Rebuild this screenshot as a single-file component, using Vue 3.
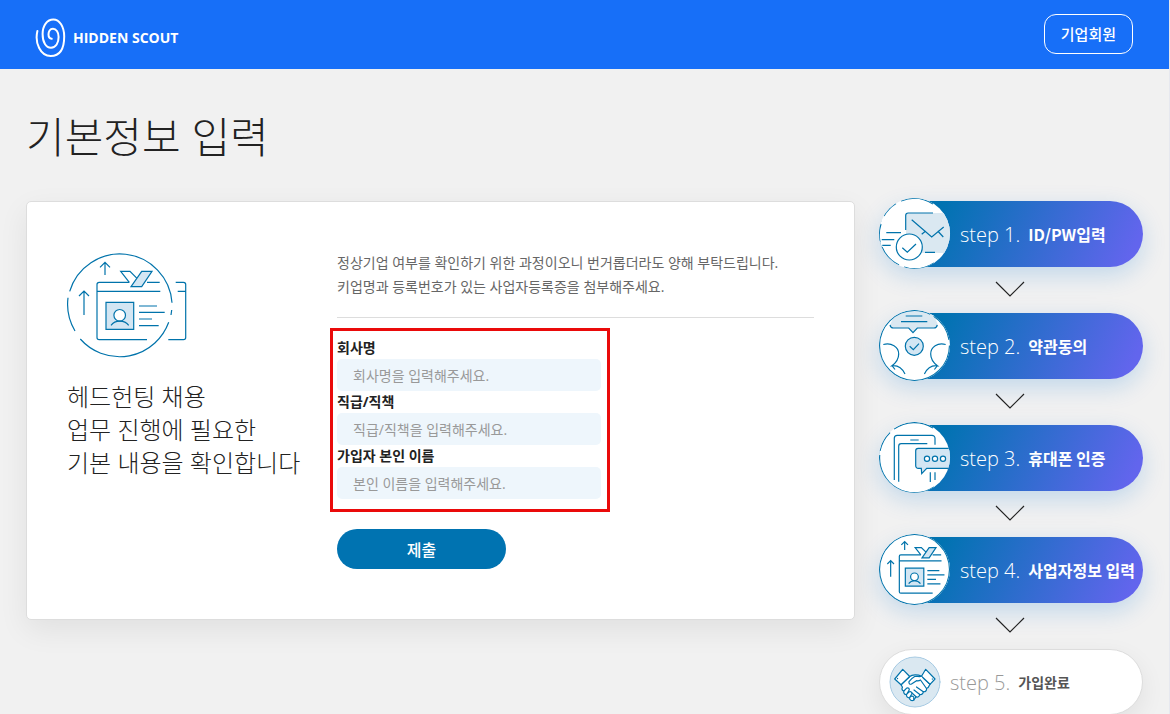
<script setup>
const fields = [
  { id: 'company', label: '회사명', placeholder: '회사명을 입력해주세요.' },
  { id: 'position', label: '직급/직책', placeholder: '직급/직책을 입력해주세요.' },
  { id: 'name', label: '가입자 본인 이름', placeholder: '본인 이름을 입력해주세요.' },
]

const steps = [
  { no: 1, label: 'ID/PW입력' },
  { no: 2, label: '약관동의' },
  { no: 3, label: '휴대폰 인증' },
  { no: 4, label: '사업자정보 입력' },
]
</script>

<template>
  <div class="page">
    <svg class="defs" width="0" height="0" aria-hidden="true">
      <symbol id="idcard" overflow="visible">
        <path d="M31 34.5a2.2 2.2 0 0 1 2.2-2.2H63.3M81 32.3h12.7M109.7 32.3h7.8a2.2 2.2 0 0 1 2.2 2.2v53a2.2 2.2 0 0 1-2.2 2.2h-15.2M81 89.7H33.2a2.2 2.2 0 0 1-2.2-2.2v-53M31 41.3h63.3M111.7 41.3h8" />
        <path class="tint" d="M40 52.3h27.7v27H40z" />
        <circle class="blank" cx="53.7" cy="65.3" r="5.8" />
        <path d="M45 75.3c2-2.700 5-4.200 8.700-4.200s7 1.500 9 4.200M73 56h18M73 62.300h25.700M73 69h13M73 75.700h19.700" />
        <path d="M39 25V12.300M34 17.300l5-5 5 5M18 65V41M13 46l5-5 5 5" />
        <path d="M63.300 32.300L54.700 21.300H64l7 7" />
        <path class="tint" d="M75.700 21.300H86L75.700 36.700H65z" />
      </symbol>
    </svg>

    <header class="top">
      <a class="brand" href="#">
        <svg class="spiral" viewBox="0 0 31 40" aria-hidden="true">
          <path d="M2.400 13C-.5 25 5.500 38 15.700 38S29.200 29 29.200 18.500C29.200 8.500 24.500 1.500 18.300 1.500S7.600 7.500 7.600 16C7.600 24.500 11 29.800 16 29.800s7.600-5 7.600-10.800c0-5-2.500-8.200-5.600-8.200s-4.500 3-4.500 5.800c0 2.600 1.500 4 3.200 4.200" />
        </svg>
        <span>HIDDEN SCOUT</span>
      </a>
      <button class="member" type="button">기업회원</button>
    </header>

    <main class="body">
      <h1>기본정보 입력</h1>
      <div class="columns">
        <section class="card">
          <div class="intro">
            <svg class="intro-icon line" viewBox="0 0 122 108" aria-hidden="true">
              <path d="M3.700 41.300A52.300 52.300 0 0 1 106 52.700M105.700 60l-.7 5M102.700 72.300A52.300 52.300 0 0 1 14.300 89M9 81A52.300 52.300 0 0 1 2 47.700" />
              <use href="#idcard" />
            </svg>
            <h2>헤드헌팅 채용<br />업무 진행에 필요한<br />기본 내용을 확인합니다</h2>
          </div>
          <form class="form" @submit.prevent>
            <p class="notice">정상기업 여부를 확인하기 위한 과정이오니 번거롭더라도 양해 부탁드립니다.<br />키업명과 등록번호가 있는 사업자등록증을 첨부해주세요.</p>
            <div class="frame">
              <div v-for="f in fields" :key="f.id" class="field">
                <label :for="f.id">{{ f.label }}</label>
                <input :id="f.id" type="text" :placeholder="f.placeholder" />
              </div>
            </div>
            <button class="submit" type="submit">제출</button>
          </form>
        </section>

        <ol class="steps">
          <li v-for="s in steps" :key="s.no">
            <div class="pill">
              <span class="badge">
                <svg v-if="s.no === 1" class="line" viewBox="0 0 71 71" aria-hidden="true">
                  <path class="wash" d="M27 15h44v40H27z" />
                  <path d="M26.700 32V17.500a2.500 2.500 0 0 1 2.500-2.500H54M32.700 21.700l20 17.300 12-10M42.700 36.300l4-3.300M58.700 33l5.600 6M7.300 34.700H22M2.700 41.700h12.600M3.300 47.300h8.400M46 54.300h10" />
                  <circle class="blank" cx="30.300" cy="49" r="13" />
                  <path d="M23.300 49.700l5 4.600 8.700-8.300" />
                  <path d="M5 18A35 35 0 0 1 17 5.500M22 3A35 35 0 0 1 54 6M1 44A35 35 0 0 1 2 26M3 49A35 35 0 0 0 20 67M25 69A35 35 0 0 0 55 65" />
                </svg>
                <svg v-else-if="s.no === 2" class="line" viewBox="0 0 71 71" aria-hidden="true">
                  <path class="wash" d="M11 15L18 0h35l6 15-4 3H38.300L34 22.700 29.700 18h-15z" />
                  <path d="M11 15c.5 2 1.500 3 3.300 3h15.400l4.300 4.700 4.300-4.700H55c1.800 0 2.800-1 3.300-3M26.700 6h16.600M22 11.700h26.300" />
                  <circle class="tint" cx="35.300" cy="36.300" r="9" />
                  <path d="M30.700 36.300l3.600 3.400 5.700-6" />
                  <path d="M4.300 34.500c8-2 15.400 2 15.400 9.500 0 5-3 9-6.700 11.700 7-.7 10.500 3 13 8.300M13 55.700l3 3.800M66.700 34.500c-8-2-15 2-15 9.500 0 5 3 9 6.700 11.700-7-.7-10.500 3-13 8.300M58.400 55.700l-3 3.800" />
                  <circle cx="35.500" cy="35.500" r="35" stroke-dasharray="181 4 29 6" />
                </svg>
                <svg v-else-if="s.no === 3" class="line" viewBox="0 0 71 71" aria-hidden="true">
                  <path d="M15.300 58V16.300a3 3 0 0 1 3-3H53a3 3 0 0 1 3 3v6.400M31.300 18h8.400M19.700 59.700V24.200a2.500 2.500 0 0 1 2.500-2.500h26.100M51.300 50.300V60M56 50.300V58" />
                  <path class="tint" d="M75 26.300H39.200a2.500 2.500 0 0 0-2.500 2.500v15a2.500 2.500 0 0 0 2.500 2.500h3.100l.4 5.400 5-5.400H75" />
                  <g class="blank"><circle cx="48" cy="36.700" r="2.600" /><circle cx="56" cy="36.700" r="2.600" /><circle cx="64" cy="36.700" r="2.600" /></g>
                  <path d="M1 29A35 35 0 0 1 11 10.500M15 7A35 35 0 0 1 54 6M.7 33A35 35 0 0 0 55 65" />
                </svg>
                <svg v-else class="line" viewBox="0.500 1 106.500 106.500" aria-hidden="true">
                  <use href="#idcard" />
                  <circle class="ring" cx="53.750" cy="54.250" r="52.500" />
                </svg>
              </span>
              <span class="no">step {{ s.no }}.</span>
              <strong>{{ s.label }}</strong>
            </div>
            <svg class="chevron" viewBox="0 0 30 16" aria-hidden="true"><path d="M1 1l14 14L29 1" /></svg>
          </li>
          <li>
            <div class="pill last">
              <span class="badge">
                <svg class="hands" viewBox="0 0 52 52" aria-hidden="true">
                  <circle class="disc" cx="26" cy="26" r="25" />
                  <path d="M20.700 20.500C23 18.500 29 18.500 32.500 20.200L41 28.300c-1 2.500-2 3.700-3.500 4.200.5 2-1.200 3.600-3.200 3.200 0 2-1.700 3.300-3.500 2.800-.3 2-2 3-3.800 2.300L24.800 44c-2 1.500-4.500 0-4.200-2.200-2.200.3-3.600-1.500-3-3.300-2 .2-3.400-1.500-2.700-3.500-2-.5-2.400-2.300-1.400-3.800L12 28.700z" />
                  <path d="M13.700 13.300l7 7.200L12 28.700 5.700 23zM36.700 13.300L46 23l-5 5.300-8.500-8.100z" />
                  <path d="M32.500 20.200c-2 .9-4.500-.2-6.800.3-1.800 1-4.500 3.500-5.700 5.200-.5 2 1 3 2.500 2.300l5-3.300c1.500.3 3 0 4-.7l6 8.500M27.500 31l6.800 4.700M25 34l5.800 4.500M23 37l4 3.800" />
                  <path d="M14.900 35l2.500-2.700c1.800-1.300 3.700.5 2.500 2.300l-2.300 3.600 2.500-2.300c1.800-1 3.500.7 2.500 2.400l-2 3.200 1.500-1.200c1.800-.8 3.300.8 2.600 2.300L24.800 44M8.500 22.500l.1.100M43.300 23l.1.100" />
                </svg>
              </span>
              <span class="no">step 5.</span>
              <strong>가입완료</strong>
            </div>
          </li>
        </ol>
      </div>
    </main>
  </div>
</template>

<style>
body {
  margin: 0;
  background: #f1f1f1;
}
</style>

<style scoped>
.page {
  font-family: "Open Sans", "Noto Sans CJK KR", sans-serif;
  color: #222;
  border-right: 1px solid #e6e8ef;
}
.defs {
  position: absolute;
}
.defs path,
.defs circle,
.ring {
  vector-effect: non-scaling-stroke;
}
.top {
  display: flex;
  align-items: center;
  justify-content: space-between;
  height: 69px;
  padding: 0 36px 0 35px;
  background: #176ff8;
}
.brand {
  display: flex;
  align-items: center;
  gap: 7px;
  margin-top: 6px;
  color: #fff;
  font: 700 14px/20px "Open Sans", sans-serif;
  text-decoration: none;
}
.spiral {
  width: 31px;
  height: 40px;
  fill: none;
  stroke: #fff;
  stroke-width: 2;
  stroke-linecap: round;
}
button,
input {
  font-family: inherit;
}
.member {
  box-sizing: border-box;
  height: 40px;
  margin-bottom: 2px;
  padding: 0 16px;
  border: 1px solid #fff;
  border-radius: 12px;
  background: none;
  color: #fff;
  font-size: 15px;
  font-weight: 500;
}
.body {
  padding: 38px 26px 0;
}
h1 {
  margin: 0 0 34px;
  font-size: 42px;
  font-weight: 300;
  line-height: 60px;
}
.columns {
  display: flex;
  align-items: flex-start;
  gap: 24px;
}
.card {
  display: flex;
  flex: 1;
  padding: 48px 40px 50px;
  border: 1px solid #ddd;
  border-radius: 5px;
  background: #fff;
  box-shadow: 0 10px 30px rgba(0, 0, 0, 0.07);
}
.intro {
  width: 270px;
  flex: none;
}
.intro-icon {
  display: block;
  width: 122px;
  height: 108px;
  margin: 0 0 22px -1px;
}
h2 {
  margin: 0;
  font-size: 24px;
  font-weight: 300;
  line-height: 33px;
}
.form {
  flex: 1;
}
.notice {
  margin: 0 0 10px;
  padding: 1px 0 18px;
  border-bottom: 1px solid #ddd;
  color: #666;
  font-size: 14px;
  line-height: 24px;
}
.frame {
  box-sizing: border-box;
  width: 280px;
  margin: 0 0 17px -7px;
  padding: 6px 6px 10px 4px;
  border: 3px solid #ea0a0a;
}
.field label {
  display: block;
  font-size: 14px;
  font-weight: 700;
  line-height: 22px;
}
.field input {
  display: block;
  box-sizing: border-box;
  width: 100%;
  height: 32px;
  padding: 0 16px;
  border: 0;
  border-radius: 5px;
  background: #eef6fc;
  color: #222;
  font-size: 14px;
}
.field input::placeholder {
  color: #999;
}
.submit {
  display: block;
  width: 169px;
  height: 40px;
  padding: 0;
  border: 0;
  border-radius: 20px;
  background: #0073b1;
  color: #fff;
  font-size: 16px;
  font-weight: 500;
}
.steps {
  width: 264px;
  flex: none;
  margin: 0;
  padding: 0;
  list-style: none;
}
.pill {
  display: flex;
  align-items: center;
  height: 66px;
  border-radius: 33px;
  background: linear-gradient(115deg, #0073b1 22%, #6265ed 94%);
  box-shadow: 0 8px 25px rgba(0, 115, 210, 0.2);
  color: #fff;
  white-space: nowrap;
}
.badge {
  flex: none;
  width: 71px;
  height: 71px;
  margin: 0 10px 1px 0;
  border-radius: 50%;
  background: #fff;
  overflow: hidden;
}
.badge svg {
  display: block;
  width: 100%;
  height: 100%;
}
.no {
  margin-right: 8px;
  font-size: 20px;
  font-weight: 300;
}
.pill strong {
  font-family: "Noto Sans CJK KR", sans-serif;
  font-size: 16px;
  font-weight: 700;
}
.chevron {
  display: block;
  width: 30px;
  height: 16px;
  margin: 14px auto 16px 116px;
  fill: none;
  stroke: #222;
  stroke-width: 1.2;
}
.pill.last {
  box-sizing: border-box;
  padding-left: 9px;
  border: 1px solid #ddd;
  background: #fff;
  box-shadow: 0 8px 25px rgba(0, 0, 0, 0.07);
  color: #999;
}
.last .badge {
  width: 52px;
  height: 52px;
  margin: 0 9px 0 0;
}
.last strong {
  color: #555;
  font-size: 14px;
}
.line {
  fill: none;
  stroke: #0073ab;
  stroke-width: 1.2;
}
.line .tint,
#idcard .tint {
  fill: #d3e6f3;
}
.line .wash {
  fill: #dae8f1;
  stroke: none;
}
.blank {
  fill: #fff;
}
.hands {
  fill: #fff;
  stroke: #0073ab;
  stroke-width: 1.2;
  stroke-linejoin: round;
  stroke-linecap: round;
}
.hands .disc {
  fill: #dae8f1;
  stroke: #a5c9e2;
  stroke-width: 1;
}
</style>
